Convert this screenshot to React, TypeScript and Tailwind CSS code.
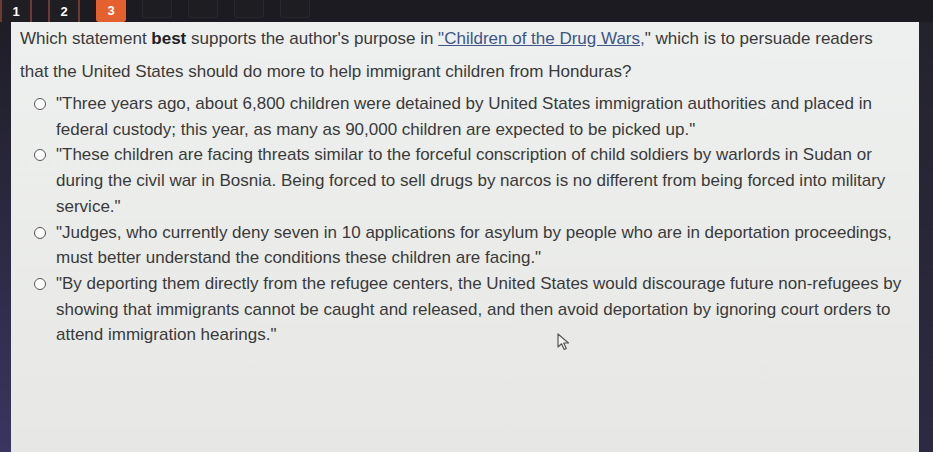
import React from 'react'

// lines broken where the screen breaks them
const options = [
  [
    '"Three years ago, about 6,800 children were detained by United States immigration authorities and placed in',
    'federal custody; this year, as many as 90,000 children are expected to be picked up."',
  ],
  [
    '"These children are facing threats similar to the forceful conscription of child soldiers by warlords in Sudan or',
    'during the civil war in Bosnia. Being forced to sell drugs by narcos is no different from being forced into military',
    'service."',
  ],
  [
    '"Judges, who currently deny seven in 10 applications for asylum by people who are in deportation proceedings,',
    'must better understand the conditions these children are facing."',
  ],
  [
    '"By deporting them directly from the refugee centers, the United States would discourage future non-refugees by',
    'showing that immigrants cannot be caught and released, and then avoid deportation by ignoring court orders to',
    'attend immigration hearings."',
  ],
]

function NavBox({ n, active, faded }: { n?: number; active?: boolean; faded?: boolean }) {
  if (active) {
    return (
      <div className="w-[30px] h-[22px] rounded-b-[3px] bg-[#e4602f] text-white text-[13px] font-bold flex items-center justify-center">
        {n}
      </div>
    )
  }
  return (
    <div
      className={
        faded
          ? 'w-[30px] h-[18px] rounded-b-[3px] border border-t-0 border-[#29282e] bg-[#1e1d22]'
          : 'w-[32px] h-[25px] rounded-b-[3px] border-2 border-t-0 border-[#6f3a33] bg-[#1f1e22] text-white text-[13px] font-bold flex items-center justify-center'
      }
    >
      {n}
    </div>
  )
}

export default function App() {
  return (
    <div
      className="w-[933px] h-[452px] overflow-hidden flex flex-col bg-[#1c1b21] relative"
      style={{ fontFamily: '"Liberation Sans", Arial, sans-serif' }}
    >
      {/* question nav */}
      <div className="h-[22px] shrink-0 flex items-start gap-[16px]">
        <NavBox n={1} />
        <NavBox n={2} />
        <NavBox n={3} active />
        <NavBox faded />
        <NavBox faded />
        <NavBox faded />
        <NavBox faded />
      </div>

      <div className="flex flex-1">
        <div className="w-[11px] bg-gradient-to-b from-[#1f1e26] to-[#3a3560]" />
        <div className="flex-1 bg-gradient-to-b from-[#eef0ef] to-[#e7e8e5] text-[#3a3a3a] whitespace-nowrap">
          <p className="pl-[9px] leading-[33px] text-[17px]">
            Which statement <b className="text-[#222]">best</b> supports the author's purpose in{' '}
            <span className="underline text-[#3e5585]">"Children of the Drug Wars,</span>" which is to persuade readers
            <br />
            that the United States should do more to help immigrant children from Honduras?
          </p>
          <div className="flex flex-col mt-[3px] pl-[23px] text-[17px]">
            {options.map((lines, i) => (
              <div key={i} className="flex items-start gap-[10px] leading-[25.7px]">
                <span className="mt-[7px] w-[12px] h-[12px] shrink-0 rounded-full border-[1.5px] border-[#555] bg-white" />
                <span>
                  {lines.map((l, j) => (
                    <React.Fragment key={j}>
                      {j > 0 && <br />}
                      {l}
                    </React.Fragment>
                  ))}
                </span>
              </div>
            ))}
          </div>
        </div>
        <div className="w-[14px] bg-gradient-to-b from-[#24232c] to-[#2c2a42]" />
      </div>

      {/* mouse cursor */}
      <svg className="absolute left-[557px] top-[333px]" width="14" height="18" viewBox="0 0 14 18">
        <path d="M1 1 L1 14 L4.5 10.8 L7.2 16.5 L9.3 15.5 L6.7 10 L11.5 10 Z" fill="#f4f4f4" stroke="#555" strokeWidth="1.2" strokeLinejoin="round" />
      </svg>
    </div>
  )
}
